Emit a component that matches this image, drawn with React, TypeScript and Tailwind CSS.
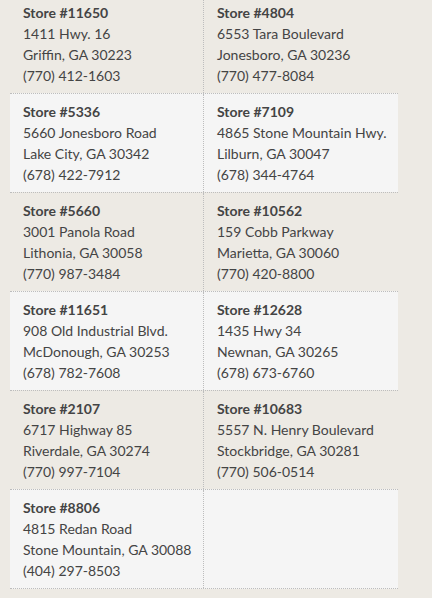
const stores = [
  { id: "11650", street: "1411 Hwy. 16", city: "Griffin, GA 30223", phone: "(770) 412-1603" },
  { id: "4804", street: "6553 Tara Boulevard", city: "Jonesboro, GA 30236", phone: "(770) 477-8084" },
  { id: "5336", street: "5660 Jonesboro Road", city: "Lake City, GA 30342", phone: "(678) 422-7912" },
  { id: "7109", street: "4865 Stone Mountain Hwy.", city: "Lilburn, GA 30047", phone: "(678) 344-4764" },
  { id: "5660", street: "3001 Panola Road", city: "Lithonia, GA 30058", phone: "(770) 987-3484" },
  { id: "10562", street: "159 Cobb Parkway", city: "Marietta, GA 30060", phone: "(770) 420-8800" },
  { id: "11651", street: "908 Old Industrial Blvd.", city: "McDonough, GA 30253", phone: "(678) 782-7608" },
  { id: "12628", street: "1435 Hwy 34", city: "Newnan, GA 30265", phone: "(678) 673-6760" },
  { id: "2107", street: "6717 Highway 85", city: "Riverdale, GA 30274", phone: "(770) 997-7104" },
  { id: "10683", street: "5557 N. Henry Boulevard", city: "Stockbridge, GA 30281", phone: "(770) 506-0514" },
  { id: "8806", street: "4815 Redan Road", city: "Stone Mountain, GA 30088", phone: "(404) 297-8503" },
];

type Store = (typeof stores)[number];

function Cell({ store, right }: { store?: Store; right?: boolean }) {
  return (
    <div
      className={`w-1/2 px-[13px] py-[7px] whitespace-nowrap ${right ? "" : "border-r border-dotted border-[#bdbdbd]"}`}
    >
      {store && (
        <>
          <div className="font-bold">Store #{store.id}</div>
          <div>{store.street}</div>
          <div>{store.city}</div>
          <div>{store.phone}</div>
        </>
      )}
    </div>
  );
}

export default function App() {
  const rows: Store[][] = [];
  for (let i = 0; i < stores.length; i += 2) rows.push(stores.slice(i, i + 2));

  return (
    <div
      className="min-h-[598px] bg-[#edeae4] overflow-hidden text-[#444444] text-[14px] leading-[21px]"
      style={{ fontFamily: "Lato, sans-serif" }}
    >
      <div className="ml-[10px] w-[388px] -mt-[5px]">
        {rows.map((row, idx) => (
          <div
            key={idx}
            className={`flex ${idx > 0 ? "border-t border-dotted border-[#bdbdbd]" : ""} ${idx === rows.length - 1 ? "border-b" : ""} ${idx % 2 === 1 || idx === rows.length - 1 ? "bg-[#f5f5f5]" : ""}`}
          >
            <Cell store={row[0]} />
            <Cell store={row[1]} right />
          </div>
        ))}
      </div>
    </div>
  );
}
